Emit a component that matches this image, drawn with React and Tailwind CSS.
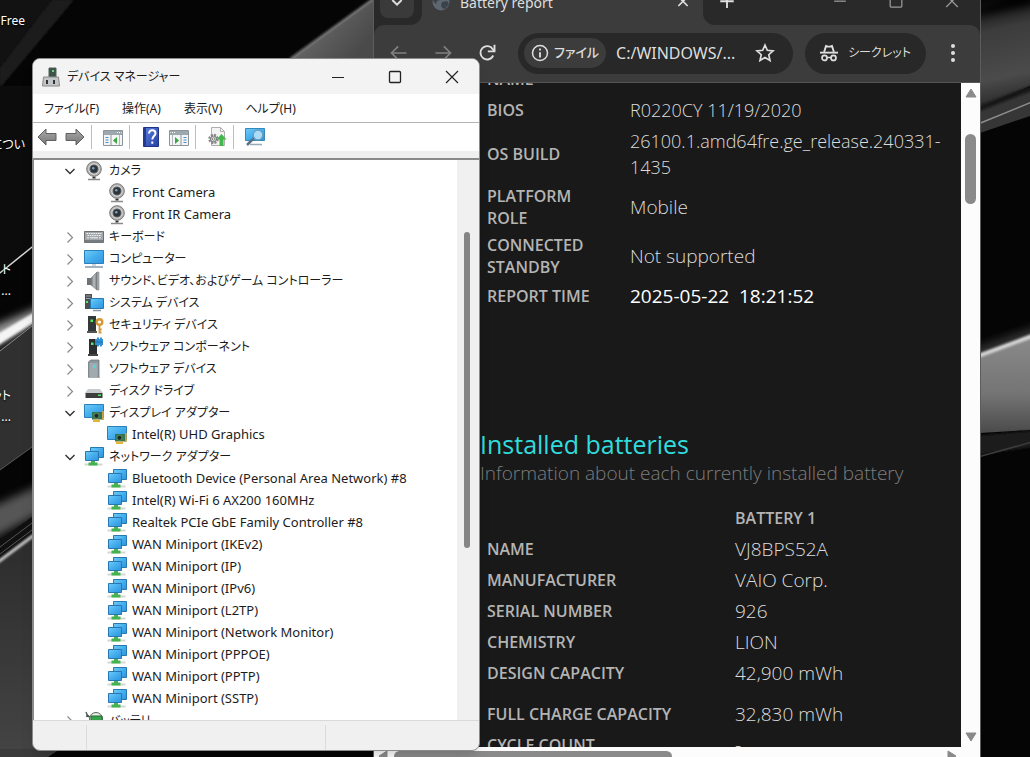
import React from "react";

const JP = "font-['Noto_Sans','Noto_Sans_CJK_JP',sans-serif]";

function Wallpaper() {
  return (
    <svg className="absolute inset-0 h-full w-full" viewBox="0 0 1030 757" preserveAspectRatio="xMidYMid slice" aria-hidden="true">
      <defs>
        <linearGradient id="wedge" x1="0" y1="0" x2="1" y2="0.6">
          <stop offset="0" stopColor="#777" />
          <stop offset="1" stopColor="#4a4a4a" />
        </linearGradient>
        <linearGradient id="rightTop" x1="0" y1="0" x2="0.1" y2="1">
          <stop offset="0" stopColor="#060606" />
          <stop offset="0.3" stopColor="#3c3c3c" />
          <stop offset="0.75" stopColor="#4b4b4b" />
          <stop offset="1" stopColor="#2a2a2a" />
        </linearGradient>
        <linearGradient id="rightMid" x1="0" y1="0" x2="0" y2="1">
          <stop offset="0" stopColor="#8a8a8a" />
          <stop offset="0.6" stopColor="#747474" />
          <stop offset="1" stopColor="#4a4a4a" />
        </linearGradient>
        <linearGradient id="leftLow" x1="0" y1="0" x2="0" y2="1">
          <stop offset="0" stopColor="#2c2c2c" />
          <stop offset="1" stopColor="#444" />
        </linearGradient>
        <filter id="soft" x="-50%" y="-50%" width="200%" height="200%">
          <feGaussianBlur stdDeviation="4" />
        </filter>
        <filter id="softer" x="-50%" y="-50%" width="200%" height="200%">
          <feGaussianBlur stdDeviation="1" />
        </filter>
      </defs>
      <rect width="1030" height="757" fill="#050505" />
      <path d="M0 0H72L0 86Z" fill="#121212" />
      <path d="M52 0H74L0 88V68Z" fill="#1b1b1b" filter="url(#softer)" />
      <path d="M292 58L373 -1V58Z" fill="url(#wedge)" />
      <path d="M290 59L373 -1" stroke="#858585" strokeWidth="2" filter="url(#softer)" />

      <path d="M0 86H32V247L0 273Z" fill="#0c0c0c" />
      <path d="M-2 274.5L34 245.500" stroke="#d8d8d8" strokeWidth="1.5" />
      <path d="M-10 328L42 306V322L-10 350Z" fill="#9a9a9a" filter="url(#soft)" />
      <path d="M-6 336L40 309V318L-6 348Z" fill="#f4f4f4" filter="url(#softer)" />
      <path d="M0 350L32 325V447L0 470Z" fill="#303030" />
      <path d="M0 351L32 326" stroke="#8a8a8a" strokeWidth="1" />
      <path d="M0 470L32 447" stroke="#5a5a5a" strokeWidth="1" />
      <path d="M-10 508L42 484V512L-10 540Z" fill="#565656" filter="url(#soft)" />
      <path d="M0 540L32 517V537L0 560Z" fill="#101010" />
      <path d="M0 547L32 523M0 554L32 530" stroke="#555" strokeWidth="1" />
      <path d="M0 562L34 536V757H0Z" fill="url(#leftLow)" />
      <path d="M-2 562L34 535" stroke="#d0d0d0" strokeWidth="3" filter="url(#softer)" />
      <path d="M32 749H60L48 757H0V749Z" fill="#3a3a3a" />

      <path d="M980 0H1030V86L980 108Z" fill="url(#rightTop)" />
      <path d="M975 10L1035 -14V4L975 16Z" fill="#050505" filter="url(#soft)" />
      <path d="M980 108L1030 88V116L980 133Z" fill="#363636" />
      <path d="M978 109L1032 88" stroke="#151515" strokeWidth="5" filter="url(#softer)" />
      <path d="M978 124L1032 102" stroke="#8e8e8e" strokeWidth="1.5" />
      <path d="M970 350L1040 325V340L970 360Z" fill="#333" filter="url(#soft)" />
      <path d="M980 355L1030 336V430L980 433Z" fill="url(#rightMid)" />
      <path d="M978 356L1032 336" stroke="#d2d2d2" strokeWidth="4" filter="url(#softer)" />
      <path d="M970 436L1040 430V446L970 456Z" fill="#1a1a1a" filter="url(#softer)" />
      <path d="M978 457L1032 442" stroke="#3c3c3c" strokeWidth="1.500" />
    </svg>
  );
}

/* ---------- Device icons ---------- */

function Svg({ children, className = "h-5 w-5 shrink-0" }) {
  return (
    <svg className={className} viewBox="0 0 20 20" fill="none" aria-hidden="true">
      {children}
    </svg>
  );
}

function Gradients() {
  return (
    <svg className="absolute h-0 w-0" aria-hidden="true">
      <defs>
        <linearGradient id="screen" x1="0" y1="0" x2="1" y2="1">
          <stop offset="0" stopColor="#6fcdf8" />
          <stop offset="0.5" stopColor="#45aeee" />
          <stop offset="1" stopColor="#2f93dc" />
        </linearGradient>
        <linearGradient id="steel" x1="0" y1="0" x2="1" y2="0">
          <stop offset="0" stopColor="#6c7175" />
          <stop offset="0.5" stopColor="#b9bdc0" />
          <stop offset="1" stopColor="#74797d" />
        </linearGradient>
        <linearGradient id="arrow" x1="0" y1="0" x2="0" y2="1">
          <stop offset="0" stopColor="#a9a9a9" />
          <stop offset="1" stopColor="#777" />
        </linearGradient>
        <linearGradient id="help" x1="0" y1="0" x2="1" y2="1">
          <stop offset="0" stopColor="#5d80de" />
          <stop offset="1" stopColor="#2440a4" />
        </linearGradient>
      </defs>
    </svg>
  );
}

const icons = {
  camera: (
    <Svg>
      <path d="M4 18.500h12" stroke="#8a8a8a" strokeWidth="1.300" />
      <path d="M8.500 16.500h3" stroke="#333" strokeWidth="2" />
      <circle cx="10" cy="8" r="7.300" fill="#b4b4b4" stroke="#777" />
      <circle cx="10" cy="8" r="5.200" fill="#7d7d7d" stroke="#dadada" />
      <circle cx="10" cy="8" r="3.700" fill="#2c343c" />
      <circle cx="9.300" cy="7.200" r="1.300" fill="#7f9cb4" />
    </Svg>
  ),
  keyboard: (
    <Svg>
      <path d="M0.500 4.500h19v11h-19z" fill="#a3a7aa" stroke="#6d7174" />
      <path d="M1 13h18v2.500H1z" fill="#777c80" />
      <path d="M2.500 6.500h15M3.500 8.500h14" stroke="#f2f2f2" strokeDasharray="1.500 .8" />
      <path d="M3 10.800h2M6 10.800h8M15 10.800h2" stroke="#f2f2f2" />
    </Svg>
  ),
  computer: (
    <Svg>
      <path d="M0.500 1.500h19v13h-19z" fill="url(#screen)" stroke="#2d7fb8" />
      <path d="M8 15h4v2H8z" fill="#cfd5da" />
      <path d="M1 18h18" stroke="#a3b2c0" strokeWidth="2" />
    </Svg>
  ),
  speaker: (
    <Svg>
      <path d="M3 7h4v7H3z" fill="#6e7276" />
      <path d="M7 7l6-6v18l-6-5z" fill="url(#steel)" stroke="#75797d" strokeWidth=".6" />
      <path d="M13 1h2v18h-2z" fill="#aaaeb1" stroke="#777" strokeWidth=".5" />
    </Svg>
  ),
  system: (
    <Svg>
      <path d="M1 1h7v15H1z" fill="#4a4f54" />
      <path d="M2 3h5M2 5.500h5" stroke="#9aa0a5" />
      <path d="M2 8h2v2H2z" fill="#5ee36a" />
      <path d="M6.500 5.500h13v10h-13z" fill="url(#screen)" stroke="#2677ae" />
      <path d="M9 17.500h8" stroke="#8496a4" strokeWidth="1.500" />
    </Svg>
  ),
  security: (
    <Svg>
      <path d="M4 1h8v15H4z" fill="#33383b" />
      <path d="M3 16h10v2H3z" fill="#555" />
      <path d="M6.500 4.500h2.500v2.500H6.500z" fill="#4ef05c" />
      <circle cx="15.500" cy="7" r="2.800" stroke="#d39a37" strokeWidth="2.400" />
      <path d="M15.500 10.500v8M15.500 14.500h2.200M15.500 17.500h2" stroke="#d39a37" strokeWidth="1.800" />
    </Svg>
  ),
  component: (
    <Svg>
      <path d="M5 2h8v15H5z" fill="#2b2f32" />
      <path d="M4 17h10v2H4z" fill="#444" />
      <path d="M7 5.500h2.500v2.500H7z" fill="#4ef05c" />
      <path d="M11 2h2v-1.500h2V2h1v-1.500h2V2h1v6h-1v1.500h-2V8h-1v1.500h-2V8h-2z" fill="#3291d3" />
      <path d="M11 5h8" stroke="#2270ad" />
    </Svg>
  ),
  software: (
    <Svg>
      <path d="M4.500 3l2-2h8.500v17H4.500z" fill="#8d969c" stroke="#70787d" strokeWidth=".8" />
      <path d="M5.500 4h8v14h-8z" fill="#a1aaaf" />
      <path d="M9 6h2.500v3H9z" fill="#58d8d3" />
      <path d="M4 18.500h12" stroke="#a8adb0" />
    </Svg>
  ),
  disk: (
    <Svg>
      <path d="M4 8h12l3 4H1z" fill="#c9cccf" />
      <path d="M1.500 12h17v5h-17z" fill="#3b3d3f" />
      <path d="M14 13.500h3v1.500h-3z" fill="#59e067" />
    </Svg>
  ),
  display: (
    <Svg>
      <path d="M0.500 1.500h19v13h-19z" fill="url(#screen)" stroke="#2d7fb8" />
      <path d="M8 9h11v7.500H8z" fill="#35754f" />
      <path d="M9 16.500h7v2.500H9z" fill="#e4b43b" />
      <path d="M18 8h1.800v9H18z" fill="#c7a04b" />
      <circle cx="12.500" cy="12.800" r="2.500" fill="#1c2a22" stroke="#6fa57e" strokeWidth=".7" />
    </Svg>
  ),
  network: (
    <Svg>
      <path d="M6.500 0.500h13v10h-13z" fill="url(#screen)" stroke="#2877b1" />
      <path d="M1.500 4.500h13v9h-13z" fill="url(#screen)" stroke="#2877b1" />
      <path d="M7 14h4v2H7z" fill="#4fae58" />
      <path d="M0.500 17.500h18" stroke="#cfd8d1" strokeWidth="2" />
      <path d="M4.500 17h9" stroke="#43b24f" strokeWidth="3" />
    </Svg>
  ),
  battery: (
    <Svg>
      <path d="M2 1c1 5 5 6 9 5M2 5l5 1" stroke="#4b5450" strokeWidth="1.300" />
      <circle cx="12" cy="8" r="6.500" fill="#e6ece6" stroke="#59645d" />
      <path d="M7 5h11v9H7z" fill="#36a34b" stroke="#266d33" />
      <path d="M0 11h7v7H0z" fill="#d99a3a" />
    </Svg>
  ),
};

const tree = [
  {
    label: "カメラ",
    icon: "camera",
    children: ["Front Camera", "Front IR Camera"],
  },
  { label: "キーボード", icon: "keyboard" },
  { label: "コンピューター", icon: "computer" },
  { label: "サウンド、ビデオ、およびゲーム コントローラー", icon: "speaker" },
  { label: "システム デバイス", icon: "system" },
  { label: "セキュリティ デバイス", icon: "security" },
  { label: "ソフトウェア コンポーネント", icon: "component" },
  { label: "ソフトウェア デバイス", icon: "software" },
  { label: "ディスク ドライブ", icon: "disk" },
  {
    label: "ディスプレイ アダプター",
    icon: "display",
    children: ["Intel(R) UHD Graphics"],
  },
  {
    label: "ネットワーク アダプター",
    icon: "network",
    children: [
      "Bluetooth Device (Personal Area Network) #8",
      "Intel(R) Wi-Fi 6 AX200 160MHz",
      "Realtek PCIe GbE Family Controller #8",
      "WAN Miniport (IKEv2)",
      "WAN Miniport (IP)",
      "WAN Miniport (IPv6)",
      "WAN Miniport (L2TP)",
      "WAN Miniport (Network Monitor)",
      "WAN Miniport (PPPOE)",
      "WAN Miniport (PPTP)",
      "WAN Miniport (SSTP)",
    ],
  },
  { label: "バッテリ", icon: "battery" },
];

function TreeGroup({ item }) {
  const open = Boolean(item.children);
  return (
    <li>
      <div className="flex h-[22px] items-center">
        <button type="button" aria-label={item.label} aria-expanded={open} className="mr-2 flex h-4 w-3 items-center justify-center">
          <svg className="h-3 w-3" viewBox="0 0 12 12" fill="none" aria-hidden="true">
            {open ? (
              <path d="M1.500 4L6 8.500L10.500 4" stroke="#333" strokeWidth="1.400" />
            ) : (
              <path d="M3.500 1.500L8.500 6.500L3.500 11.500" stroke="#8a8a8a" strokeWidth="1.200" />
            )}
          </svg>
        </button>
        {icons[item.icon]}
        <span className="ml-[5px]">{item.label}</span>
      </div>
      {open && (
        <ul className="pl-[43px] text-[13px]">
          {item.children.map((name) => (
            <li key={name} className="flex h-[22px] items-center gap-[5px]">
              {icons[item.icon]}
              <span>{name}</span>
            </li>
          ))}
        </ul>
      )}
    </li>
  );
}

/* ---------- Device manager ---------- */

function ToolButton({ label, children }) {
  return (
    <button type="button" aria-label={label} className="h-5 w-5">
      {children}
    </button>
  );
}

function Separator() {
  return <span className="mr-[11px] ml-[6px] h-6 w-px bg-[#bdbdbd]" />;
}

function ConsolePane({ flipped }) {
  return (
    <Svg className={flipped ? "h-5 w-5 -scale-x-100" : "h-5 w-5"}>
      <path d="M0.500 3.500h19v15h-19z" fill="#f3f5f6" stroke="#8d9499" />
      <path d="M1 4h18v4H1z" fill="#9da7ae" />
      <path d="M14 5.500h1M16 5.500h1M18 5.500h.6" stroke="#fff" />
      <path d="M8 8v10" stroke="#8d9499" />
      <path d="M2.500 10.500h3M2.500 13h3M2.500 15.500h3" stroke="#4a8cc4" />
      <path d="M14 10v7l-4-3.500z" fill="#3aa63c" />
      <path d="M16.500 8v10" stroke="#b2b8bc" />
    </Svg>
  );
}

function ArrowIcon({ flipped }) {
  return (
    <Svg className={flipped ? "h-5 w-5 -scale-x-100" : "h-5 w-5"}>
      <path d="M1 10L9 2V6.500H19V13.500H9V18Z" fill="url(#arrow)" stroke="#606060" strokeLinejoin="round" />
    </Svg>
  );
}

function DeviceManager() {
  return (
    <section
      aria-label="デバイス マネージャー"
      className={`absolute top-[58px] bottom-[6px] left-[32px] flex w-[448px] flex-col overflow-hidden rounded-lg border border-[#8b8b8b] bg-[#f0f0f0] text-[12px] text-[#1c1c1c] shadow-lg [font-feature-settings:'palt'] ${JP}`}
    >
      <header className="flex h-[35px] shrink-0 items-center bg-[#f3f3f3] pr-[17px] pl-2">
        <Svg className="h-5 w-5 shrink-0">
          <path d="M8 1h7v9H8z" fill="#3b5246" stroke="#53605a" />
          <path d="M11 3h2v2h-2z" fill="#6fd487" />
          <path d="M2.500 10h15l1 9h-17z" fill="#c3c6c8" stroke="#888" />
          <path d="M5 13h2v4H5zM12 13h2v4h-2z" fill="#333" />
        </Svg>
        <h1 className="ml-[6px] flex-1">デバイス マネージャー</h1>
        <div className="flex gap-[37px]">
          <button type="button" aria-label="最小化" className="h-5 w-5">
            <Svg><path d="M4 10.500h12" stroke="#222" /></Svg>
          </button>
          <button type="button" aria-label="最大化" className="h-5 w-5">
            <Svg><rect x="4.500" y="4.500" width="11" height="11" rx="1" stroke="#222" strokeWidth="1.300" /></Svg>
          </button>
          <button type="button" aria-label="閉じる" className="h-5 w-5">
            <Svg><path d="M4 4l12 12M16 4L4 16" stroke="#222" strokeWidth="1.200" /></Svg>
          </button>
        </div>
      </header>
      <nav className="flex h-7 shrink-0 items-center gap-[23px] bg-white pt-px pl-[11px]">
        <button type="button">ファイル(F)</button>
        <button type="button">操作(A)</button>
        <button type="button">表示(V)</button>
        <button type="button">ヘルプ(H)</button>
      </nav>
      <div className="flex h-[29px] shrink-0 items-center border-t border-[#b5b5b5] bg-white pl-1">
        <ToolButton label="戻る"><ArrowIcon /></ToolButton>
        <span className="w-2" />
        <ToolButton label="進む"><ArrowIcon flipped /></ToolButton>
        <Separator />
        <ToolButton label="コンソール ツリー"><ConsolePane /></ToolButton>
        <Separator />
        <ToolButton label="ヘルプ">
          <Svg>
            <path d="M2.500 0.500h15v19h-15z" fill="url(#help)" stroke="#1f3583" />
            <path d="M2 1h3v18H2z" fill="#243b8e" />
            <path d="M8 6.500c0-4.500 6.500-4.200 6.500-.3 0 2.800-3.200 3-3.200 6.300M11.300 14.500v2.300" stroke="#fff" strokeWidth="2" />
          </Svg>
        </ToolButton>
        <span className="w-2" />
        <ToolButton label="操作ウィンドウ"><ConsolePane flipped /></ToolButton>
        <Separator />
        <ToolButton label="ドライバーの更新">
          <Svg>
            <path d="M4.500 0.500h9l4 4v14h-13z" fill="#f4f4f4" stroke="#b0b0b0" />
            <path d="M13.500 0.500v4h4" stroke="#b0b0b0" />
            <circle cx="6.500" cy="12" r="4" stroke="#888" strokeWidth="2.500" strokeDasharray="2 1.140" />
            <circle cx="6.500" cy="12" r="3" fill="#d5d5d5" stroke="#777" />
            <circle cx="6.500" cy="12" r="1.200" fill="#fff" stroke="#888" />
            <path d="M14.500 7l5 5.500h-3V19h-4v-6.500h-3z" fill="#43b749" />
          </Svg>
        </ToolButton>
        <Separator />
        <ToolButton label="ハードウェア変更のスキャン">
          <Svg>
            <path d="M0.500 1.500h19v12h-19z" fill="url(#screen)" stroke="#3788bd" />
            <path d="M5 17.500h12" stroke="#9aaab5" strokeWidth="1.500" />
            <path d="M9 11L2 18" stroke="#54738b" strokeWidth="2.500" />
            <circle cx="13" cy="8" r="4.800" fill="#a8dcf8" stroke="#6d9cb9" strokeWidth="1.300" />
          </Svg>
        </ToolButton>
      </div>
      <div className="mt-[7px] flex min-h-0 flex-1 border-t-2 border-l border-[#8a8a8a] bg-white">
        <ul className="min-w-0 flex-1 overflow-hidden pl-[30px] whitespace-nowrap">
          {tree.map((item) => (
            <TreeGroup key={item.label} item={item} />
          ))}
        </ul>
        <div className="w-[22px] shrink-0 bg-[#f0f0f0] pt-[72px] pl-[7px]">
          <div className="h-[316px] w-[6px] rounded-full bg-[#858585]" />
        </div>
      </div>
      <footer className="flex h-[30px] shrink-0 border-t border-[#d9d9d9] pt-1">
        <span className="w-[54px] border-r border-[#dcdcdc]" />
        <span className="w-[239px] border-r border-[#dcdcdc]" />
      </footer>
    </section>
  );
}

/* ---------- Browser ---------- */

const system = [
  { label: "NAME", value: "" },
  { label: "BIOS", value: "R0220CY 11/19/2020", style: "text-[18px] font-light" },
  { label: "OS BUILD", value: "26100.1.amd64fre.ge_release.240331-\u200b1435", style: "text-[18px] font-light" },
  { label: "PLATFORM ROLE", value: "Mobile", style: "text-[19px] font-light" },
  { label: "CONNECTED STANDBY", value: "Not supported", style: "text-[19px] font-light" },
  { label: "REPORT TIME", value: "2025-05-22  18:21:52", style: "text-[19px] font-normal whitespace-pre text-white" },
];

const battery = [
  ["NAME", "VJ8BPS52A"],
  ["MANUFACTURER", "VAIO Corp."],
  ["SERIAL NUMBER", "926"],
  ["CHEMISTRY", "LION"],
  ["DESIGN CAPACITY", "42,900 mWh"],
  ["FULL CHARGE CAPACITY", "32,830 mWh"],
  ["CYCLE COUNT", "-"],
];

const labelText = "text-left text-[16px] leading-[22px] font-semibold text-[#b4b4b4]";

function Report() {
  return (
    <main className="min-w-0 flex-1 overflow-hidden bg-[#191919] pl-[106px] font-['Open_Sans',sans-serif] text-[#dcdcdc]">
      <table className="-mt-5 w-full table-fixed border-separate border-spacing-x-0 border-spacing-y-px">
        <colgroup>
          <col className="w-[150px]" />
          <col />
        </colgroup>
        <tbody>
          {system.map(({ label, value, style = "" }) => (
            <tr key={label} className="h-[30px]">
              <th scope="row" className={`${labelText} py-[2px] pr-4 pl-[7px]`}>{label}</th>
              <td className={`py-[2px] leading-[26px] ${style}`}>{value}</td>
            </tr>
          ))}
        </tbody>
      </table>
      <h2 className="mt-[116px] text-[25px] leading-8 text-[#30dcde]">Installed batteries</h2>
      <p className="text-[19px] leading-[26px] font-light text-[#7d7d7d]">Information about each currently installed battery</p>
      <table className="mt-4 w-full table-fixed border-separate border-spacing-x-0 border-spacing-y-px">
        <colgroup>
          <col className="w-[255px]" />
          <col />
        </colgroup>
        <thead>
          <tr className="h-[30px]">
            <td />
            <th scope="col" className={labelText}>BATTERY 1</th>
          </tr>
        </thead>
        <tbody>
          {battery.map(([label, value]) => {
            const pad = label === "FULL CHARGE CAPACITY" ? "pt-3 pb-[2px]" : "py-[2px]";
            return (
              <tr key={label} className="h-[30px]">
                <th scope="row" className={`${labelText} ${pad} pl-[7px]`}>{label}</th>
                <td className={`${pad} text-[19px] leading-[26px] font-light`}>{value}</td>
              </tr>
            );
          })}
        </tbody>
      </table>
    </main>
  );
}

function Glyph({ className = "h-5 w-5", children }) {
  return (
    <svg className={className} viewBox="0 0 24 24" fill="none" stroke="currentColor" strokeWidth="2" aria-hidden="true">
      {children}
    </svg>
  );
}

function TabStrip() {
  return (
    <div className="flex h-[41px] shrink-0 bg-[#3c3c3c] text-[#dedede]">
      <div className="w-12 rounded-br-xl bg-[#292929] pt-[6px] pl-[6px]">
        <button type="button" aria-label="タブを検索" className="flex h-7 w-[34px] items-center justify-center rounded-lg bg-[#3a3a3a]">
          <Glyph className="h-4 w-4"><path d="M5 6l7 7 7-7" strokeWidth="3" /></Glyph>
        </button>
      </div>
      <div className="flex w-[281px] items-center pb-[5px] pl-[10px]">
        <svg className="h-[18px] w-[18px]" viewBox="0 0 18 18" aria-hidden="true">
          <circle cx="9" cy="9" r="8.500" fill="#5d6770" />
          <path d="M3 4l4-2 3 2-2 3-3 1-1 3-3-3zM10 9l5-1 2 3-4 5-3-1-1-3z" fill="#3c4249" />
        </svg>
        <span className="ml-[10px] flex-1 text-[14px]">Battery report</span>
        <button type="button" aria-label="タブを閉じる" className="mr-3">
          <Glyph className="h-4 w-4"><path d="M5 4l14 14M19 4L5 18" strokeWidth="2.500" /></Glyph>
        </button>
      </div>
      <div className="flex flex-1 items-center rounded-bl-xl bg-[#292929] pr-[18px] pb-[6px] pl-[15px]">
        <button type="button" aria-label="新しいタブ">
          <Glyph className="h-[18px] w-[18px]"><path d="M12 2v18M3 11h18" strokeWidth="2.500" /></Glyph>
        </button>
        <div className="ml-auto flex gap-9 text-[#9a9a9a]">
          <button type="button" aria-label="最小化"><Glyph><path d="M5 11h14" strokeWidth="1.500" /></Glyph></button>
          <button type="button" aria-label="最大化"><Glyph><rect x="5" y="4" width="14" height="14" rx="1" strokeWidth="1.500" /></Glyph></button>
          <button type="button" aria-label="閉じる"><Glyph><path d="M5 4l14 14M19 4L5 18" strokeWidth="1.500" /></Glyph></button>
        </div>
      </div>
    </div>
  );
}

function AddressBar() {
  return (
    <div className="flex h-[58px] shrink-0 items-center rounded-t-[10px] border-b border-[#555] bg-[#3c3c3c] pr-[17px] pb-px pl-[15px] text-[#dedede]">
      <div className="flex items-center gap-6">
        <button type="button" aria-label="戻る" className="text-[#808080]"><Glyph><path d="M21 12H4M11 4l-8 8 8 8" /></Glyph></button>
        <button type="button" aria-label="進む" className="text-[#808080]"><Glyph><path d="M3 12h17M13 4l8 8-8 8" /></Glyph></button>
        <button type="button" aria-label="再読み込み">
          <Glyph><path d="M19.500 15a8 8 0 1 1-.5-7.500L21 10" strokeWidth="2.300" /><path d="M21 2v8h-8" strokeWidth="2.300" /></Glyph>
        </button>
      </div>
      <div className="ml-[21px] flex h-[41px] min-w-0 flex-1 items-center rounded-full bg-[#282828] pr-[18px] pl-[6px]">
        <button type="button" className="flex h-[30px] shrink-0 items-center gap-[5px] rounded-full bg-[#3c3c3c] px-[7px] text-[13px] font-medium [font-feature-settings:'palt']">
          <Glyph className="h-[18px] w-[18px]"><circle cx="12" cy="12" r="10" /><path d="M12 11v7M12 6v2.500" strokeWidth="2.500" /></Glyph>
          ファイル
        </button>
        <input
          type="text"
          aria-label="アドレス"
          readOnly
          value="C:/WINDOWS/..."
          className="ml-[10px] min-w-0 flex-1 bg-transparent text-[16px] outline-none"
        />
        <button type="button" aria-label="ブックマーク">
          <Glyph className="h-5 w-5"><path d="M12 2.500l2.800 6.300 6.900.7-5.200 4.600 1.500 6.800-6-3.600-6 3.600 1.500-6.800-5.200-4.600 6.900-.7z" /></Glyph>
        </button>
      </div>
      <button type="button" className="ml-3 flex h-[41px] shrink-0 items-center gap-[10px] rounded-full bg-[#282828] px-[15px] text-[12px] [font-feature-settings:'palt']">
        <Glyph className="h-[18px] w-[18px]">
          <path d="M0 11.500h24" strokeWidth="2.500" />
          <path d="M5.500 10.500L8 2.500l2.500 1h3l2.500-1 2.500 8" strokeWidth="2.500" />
          <circle cx="6" cy="18.500" r="3.300" strokeWidth="2.300" />
          <circle cx="18" cy="18.500" r="3.300" strokeWidth="2.300" />
          <path d="M9 18h6" />
        </Glyph>
        シークレット
      </button>
      <button type="button" aria-label="メニュー" className="ml-[17px]">
        <svg className="h-5 w-5" viewBox="0 0 20 20" fill="currentColor" aria-hidden="true">
          <circle cx="10" cy="3" r="2" /><circle cx="10" cy="10" r="2" /><circle cx="10" cy="17" r="2" />
        </svg>
      </button>
    </div>
  );
}

function Triangle({ className }) {
  return (
    <svg className={className} viewBox="0 0 12 10" aria-hidden="true">
      <path d="M6 1L11 9H1Z" fill="#8a8a8a" stroke="#8a8a8a" strokeLinejoin="round" />
    </svg>
  );
}

function Browser() {
  return (
    <section
      aria-label="Battery report"
      className={`absolute -top-[16px] right-[49px] -bottom-[8px] left-[373px] flex flex-col overflow-hidden border-x border-[#5c5c5c] bg-[#292929] ${JP}`}
    >
      <TabStrip />
      <AddressBar />
      <div className="flex min-h-0 flex-1">
        <Report />
        <div className="flex w-[19px] shrink-0 flex-col items-center bg-[#fcfcfc] pt-[5px] pb-[5px]">
          <Triangle className="h-[10px] w-3" />
          <div className="mt-9 h-[70px] w-[11px] rounded-full bg-[#8a8a8a]" />
          <Triangle className="mt-auto h-[10px] w-3 rotate-180" />
        </div>
      </div>
      <div className="flex h-[18px] shrink-0 items-center bg-[#fcfcfc] pr-[22px] pl-[3px]">
        <Triangle className="h-[10px] w-3 -rotate-90" />
        <div className="ml-[5px] h-[11px] w-[278px] rounded-full bg-[#8a8a8a]" />
        <Triangle className="ml-auto h-[10px] w-3 rotate-90" />
      </div>
    </section>
  );
}

/* ---------- Desktop ---------- */

function DesktopLabel({ className, children }) {
  return (
    <span className={`absolute right-full text-[12px] leading-5 whitespace-nowrap text-white [font-feature-settings:'palt'] [text-shadow:0_1px_2px_#000] ${className}`}>
      {children}
    </span>
  );
}

export default function App() {
  return (
    <div className={`relative h-screen overflow-hidden bg-black ${JP}`}>
      <Gradients />
      <Wallpaper />
      <div className="absolute top-0 left-[25px]">
        <DesktopLabel className="top-[11px]">Free</DesktopLabel>
        <DesktopLabel className="top-[135px]">につい</DesktopLabel>
      </div>
      <div className="absolute top-0 left-[11px]">
        <DesktopLabel className="top-[260px]">ト</DesktopLabel>
        <DesktopLabel className="top-[281px]">...</DesktopLabel>
        <DesktopLabel className="top-[386px]">ット</DesktopLabel>
        <DesktopLabel className="top-[407px]">...</DesktopLabel>
      </div>
      <Browser />
      <DeviceManager />
    </div>
  );
}
